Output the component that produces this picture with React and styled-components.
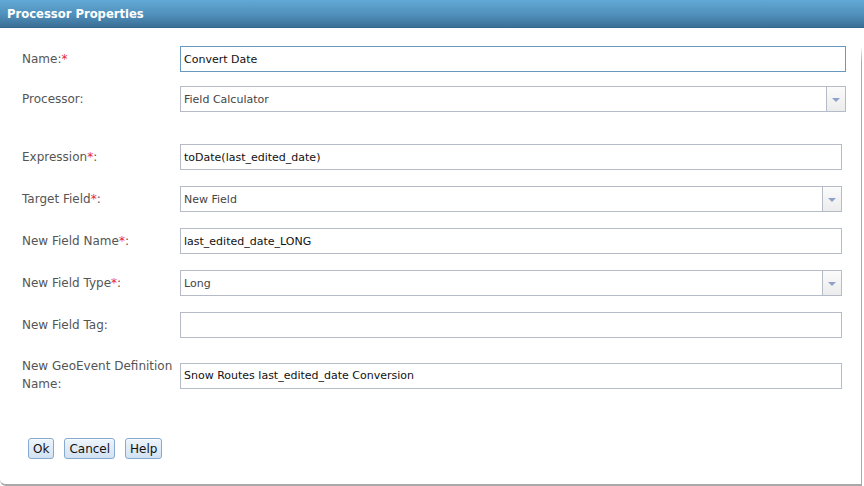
import React from 'react';
import styled, { createGlobalStyle } from 'styled-components';

const GlobalStyle = createGlobalStyle`
  html, body {
    margin: 0;
    padding: 0;
    background: #fff;
  }
  body {
    font-family: 'DejaVu Sans', Verdana, sans-serif;
  }
`;

const Dialog = styled.div`
  width: 864px;
  height: 486px;
  display: flex;
  flex-direction: column;
  box-sizing: border-box;
`;

const TitleBar = styled.div`
  height: 28px;
  flex: none;
  display: flex;
  align-items: center;
  padding-left: 7px;
  background: linear-gradient(to bottom, #63a9d5 0%, #4f8fbb 55%, #3b6f96 100%);
  border-bottom: 1px solid #35658a;
  box-sizing: border-box;
  color: #fff;
  font-size: 11.6px;
  font-weight: bold;
`;

const Body = styled.div`
  flex: 1;
  width: 862px;
  box-sizing: border-box;
  border-bottom: 2px solid #a9a9a9;
  border-bottom-left-radius: 6px;
  background:
    linear-gradient(to bottom, rgba(168, 168, 168, 0) 18px, #a9a9a9 34px) right top / 1px 100% no-repeat,
    #fff;
  padding: 18px 0 0 22px;
  display: flex;
  flex-direction: column;
`;

const Section = styled.div`
  display: flex;
  flex-direction: column;
  padding-right: ${p => p.$right}px;
  margin-top: ${p => p.$top || 0}px;
`;

const Row = styled.div`
  display: grid;
  grid-template-columns: 158px 1fr;
  align-items: center;
  min-height: 26px;
  margin-top: ${p => p.$top || 0}px;
`;

const Label = styled.label`
  font-size: 12px;
  line-height: 18px;
  color: #555;
  padding-bottom: 1px;
`;

const Req = styled.span`
  color: #e8262d;
`;

const TextBox = styled.div`
  height: 26px;
  box-sizing: border-box;
  border: 1px solid ${p => (p.$focused ? '#6898bd' : '#b6bbc8')};
  background: #fff;
  display: flex;
  align-items: center;
  padding-left: 3px;
  font-size: 11px;
  color: #111;
  white-space: nowrap;
`;

const Select = styled.div`
  height: 26px;
  box-sizing: border-box;
  border: 1px solid #b6bbc8;
  background: #fff;
  display: flex;
  align-items: stretch;
  font-size: 11px;
  color: #444;
`;

const SelectValue = styled.div`
  flex: 1;
  display: flex;
  align-items: center;
  padding-left: 3px;
`;

const DropButton = styled.div`
  width: 18px;
  border-left: 1px solid #b6bbc8;
  background: linear-gradient(to bottom, #fbfbfb, #ececec);
  display: flex;
  align-items: center;
  justify-content: center;

  &::after {
    content: '';
    width: 0;
    height: 0;
    border-left: 4px solid transparent;
    border-right: 4px solid transparent;
    border-top: 4px solid #8ea2c9;
    margin-top: 1px;
  }
`;

const Buttons = styled.div`
  display: flex;
  gap: 10px;
  margin-top: 44px;
  padding-left: 6px;
`;

const Button = styled.button`
  height: 21px;
  padding: 0 4px;
  border: 1px solid #87a8cf;
  border-radius: 3px;
  background: linear-gradient(to bottom, #edf4fb, #d2e2f3);
  font-family: 'DejaVu Sans', Verdana, sans-serif;
  font-size: 12px;
  color: #111;
  box-shadow: inset 0 1px 0 rgba(255, 255, 255, 0.7);
  cursor: pointer;
`;

const Field = ({ label, req, reqAfter, children, top }) => (
  <Row $top={top}>
    <Label>
      {label}
      {reqAfter ? <>:<Req>*</Req></> : req ? <><Req>*</Req>:</> : ':'}
    </Label>
    {children}
  </Row>
);

const Dropdown = ({ value }) => (
  <Select>
    <SelectValue>{value}</SelectValue>
    <DropButton />
  </Select>
);

export default function App() {
  return (
    <Dialog>
      <GlobalStyle />
      <TitleBar>Processor Properties</TitleBar>
      <Body>
        <Section $right={16}>
          <Field label="Name" reqAfter>
            <TextBox $focused>Convert Date</TextBox>
          </Field>
          <Field label="Processor" top={14}>
            <Dropdown value="Field Calculator" />
          </Field>
        </Section>

        <Section $right={20} $top={32}>
          <Field label="Expression" req>
            <TextBox>toDate(last_edited_date)</TextBox>
          </Field>
          <Field label="Target Field" req top={16}>
            <Dropdown value="New Field" />
          </Field>
          <Field label="New Field Name" req top={16}>
            <TextBox>last_edited_date_LONG</TextBox>
          </Field>
          <Field label="New Field Type" req top={16}>
            <Dropdown value="Long" />
          </Field>
          <Field label="New Field Tag" top={16}>
            <TextBox />
          </Field>
          <Row $top={19}>
            <Label>New GeoEvent Definition<br />Name:</Label>
            <TextBox>Snow Routes last_edited_date Conversion</TextBox>
          </Row>
        </Section>

        <Buttons>
          <Button>Ok</Button>
          <Button>Cancel</Button>
          <Button>Help</Button>
        </Buttons>
      </Body>
    </Dialog>
  );
}
